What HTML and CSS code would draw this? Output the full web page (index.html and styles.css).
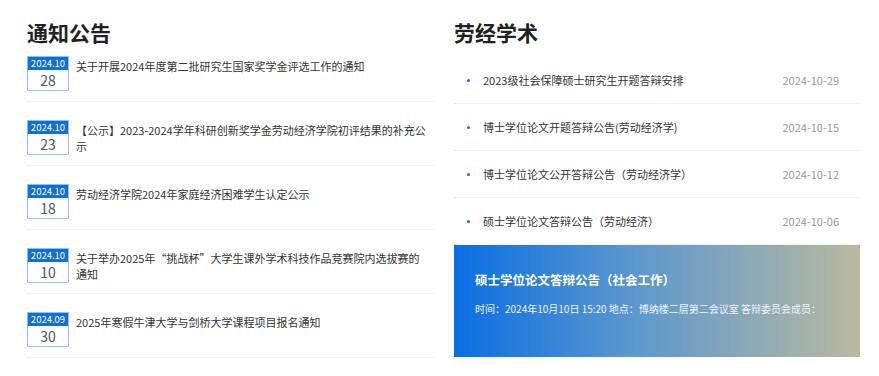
FILE: index.html
```html
<!DOCTYPE html>
<html lang="zh-CN">
  <head>
    <meta charset="utf-8">
    <title>通知公告 劳经学术</title>
    <link rel="stylesheet" href="styles.css">
  </head>
  <body>
    <div id="container">
      <div class="column">
        <h2 class="title">通知公告</h2>
        <div class="notice">
          <div class="date"><span class="month">2024.10</span><span class="day">28</span></div>
          <p class="text">关于开展2024年度第二批研究生国家奖学金评选工作的通知</p>
        </div>
        <div class="notice">
          <div class="date"><span class="month">2024.10</span><span class="day">23</span></div>
          <p class="text">【公示】2023-2024学年科研创新奖学金劳动经济学院初评结果的补充公示</p>
        </div>
        <div class="notice">
          <div class="date"><span class="month">2024.10</span><span class="day">18</span></div>
          <p class="text">劳动经济学院2024年家庭经济困难学生认定公示</p>
        </div>
        <div class="notice">
          <div class="date"><span class="month">2024.10</span><span class="day">10</span></div>
          <p class="text">关于举办2025年“挑战杯”大学生课外学术科技作品竞赛院内选拔赛的<span class="nowrap">通知</span></p>
        </div>
        <div class="notice">
          <div class="date"><span class="month">2024.09</span><span class="day">30</span></div>
          <p class="text">2025年寒假牛津大学与剑桥大学课程项目报名通知</p>
        </div>
      </div>
      <div class="column">
        <h2 class="title">劳经学术</h2>
        <ul class="news">
          <li><span class="dot"></span><span class="name">2023级社会保障硕士研究生开题答辩安排</span><span class="when">2024-10-29</span></li>
          <li><span class="dot"></span><span class="name">博士学位论文开题答辩公告(劳动经济学)</span><span class="when">2024-10-15</span></li>
          <li><span class="dot"></span><span class="name">博士学位论文公开答辩公告（劳动经济学）</span><span class="when">2024-10-12</span></li>
          <li><span class="dot"></span><span class="name">硕士学位论文答辩公告（劳动经济）</span><span class="when">2024-10-06</span></li>
        </ul>
        <div class="feature">
          <h3>硕士学位论文答辩公告（社会工作）</h3>
          <p>时间：2024年10月10日 15:20 地点：博纳楼二层第二会议室 答辩委员会成员：</p>
        </div>
      </div>
    </div>
  </body>
</html>
```

FILE: styles.css
```css
body {margin: 0; background: #fff; font-family: "Noto Sans CJK SC", "Noto Sans", sans-serif; color: #333;}
#container {display: flex; gap: 21px; padding: 20px 19px 0 27px;}
.column {width: 406px; flex: none;}
.title {margin: 0; font-size: 21px; line-height: 24px; font-weight: bold; color: #222;}

.notice {display: flex; align-items: flex-start; padding: 18px 0 10px; border-bottom: 1px dotted #e6e6e6;}
.notice:first-of-type {padding-top: 12px;}
.date {width: 42px; flex: none; display: flex; flex-direction: column; border: 1px solid #8fc1f1; box-sizing: border-box; height: 35px;}
.month {background: #0f6fe0; color: #fff; font-size: 9.5px; line-height: 13px; text-align: center;}
.day {flex: 1; font-size: 14px; line-height: 21px; text-align: center; color: #555;}
.text {margin: 2px 0 0 7px; font-size: 11px; line-height: 16px; text-spacing-trim: space-all;}
.nowrap {white-space: nowrap;}

.news {list-style: none; margin: 13px 0 0; padding: 0;}
.news li {display: flex; align-items: center; height: 46px; border-bottom: 1px dotted #e6e6e6; font-size: 11px; padding: 0 21px 0 13px;}
.dot {width: 3px; height: 3px; border-radius: 50%; background: #1570e0; margin-right: 13px;}
.name {flex: 1;}
.when {color: #999;}

.feature {height: 112px; box-sizing: border-box; padding: 26px 21px 0; background: linear-gradient(to right, #0a6ee3, #5d98cd 45%, #bab9a0); color: #fff;}
.feature h3 {margin: 0; font-size: 12.5px; line-height: 18px; font-weight: bold;}
.feature p {margin: 13px 0 0; font-size: 10px; line-height: 14px; color: #eef4fb;}
```
